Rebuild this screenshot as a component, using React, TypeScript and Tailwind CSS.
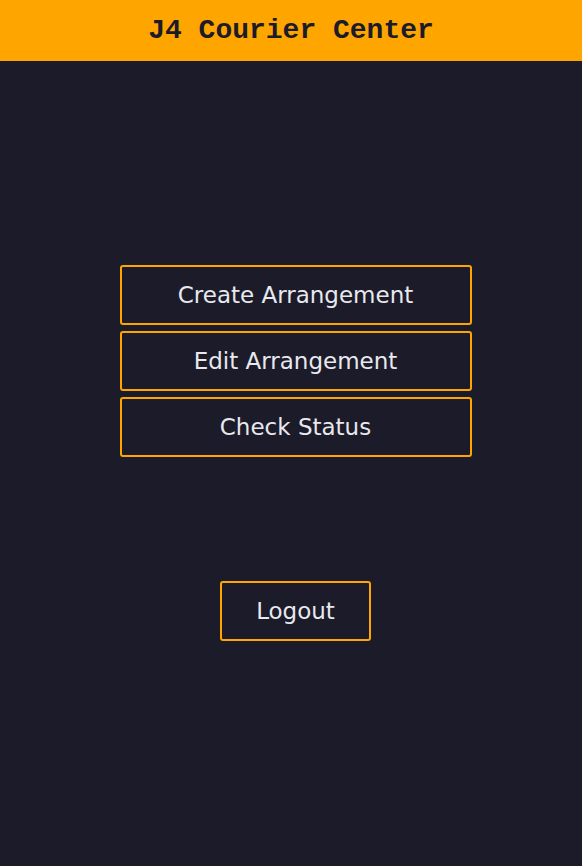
import React from 'react';

const menuItems = ['Create Arrangement', 'Edit Arrangement', 'Check Status'];

export default function App() {
  return (
    <div className="min-h-[866px] bg-[#1b1b29] flex flex-col">
      <header className="h-[61px] bg-[#ffa500] flex items-center justify-center">
        <h1 className="text-[28px] font-bold text-[#1b1b29] font-['Liberation_Mono',monospace]">
          J4 Courier Center
        </h1>
      </header>

      <main className="flex flex-col items-center pt-[204px] pl-[9px] font-['DejaVu_Sans',sans-serif]">
        <div className="flex flex-col gap-[6px]">
          {menuItems.map((item) => (
            <button
              key={item}
              className="w-[352px] h-[60px] border-2 border-[#ffa500] rounded-[3px] text-[23px] text-[#e8e8ee] bg-transparent"
            >
              {item}
            </button>
          ))}
        </div>

        <button className="mt-[124px] w-[151px] h-[60px] border-2 border-[#ffa500] rounded-[3px] text-[23px] text-[#e8e8ee] bg-transparent">
          Logout
        </button>
      </main>
    </div>
  );
}
